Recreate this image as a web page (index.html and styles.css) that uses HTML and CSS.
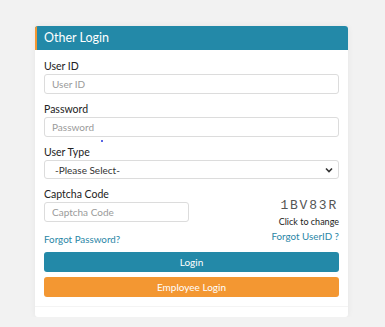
FILE: index.html
```html
<!DOCTYPE html>
<html lang="en">
<head>
  <meta charset="UTF-8" />
  <meta name="viewport" content="width=device-width, initial-scale=1.0"/>
  <title>Other Login</title>
  <link rel="stylesheet" href="styles.css">
</head>
<body>

  <div class="login-card">
    <div class="login-header">Other Login</div>

    <form class="login-body">
      <div class="field">
        <label>User ID</label>
        <input type="text" placeholder="User ID">
      </div>

      <div class="field">
        <label>Password</label>
        <input type="password" placeholder="Password">
      </div>

      <div class="field">
        <label>User Type <span class="dot"></span></label>
        <div class="select-box">
          <span>-Please Select-</span>
          <svg width="8" height="6" viewBox="0 0 8 6"><path d="M1 1.5 L4 4.5 L7 1.5" fill="none" stroke="#333" stroke-width="1.6"/></svg>
        </div>
      </div>

      <div class="captcha-row">
        <div class="captcha-left">
          <label>Captcha Code</label>
          <input type="text" placeholder="Captcha Code">
          <a class="link forgot-pass" href="#">Forgot Password?</a>
        </div>
        <div class="captcha-right">
          <div class="captcha-code">1BV83R</div>
          <div class="captcha-hint">Click to change</div>
          <a class="link" href="#">Forgot UserID ?</a>
        </div>
      </div>

      <div class="buttons">
        <button type="button" class="btn btn-login">Login</button>
        <button type="button" class="btn btn-employee">Employee Login</button>
      </div>
    </form>

    <div class="login-footer"></div>
  </div>

</body>
</html>
```

FILE: styles.css
```css
body {
  margin: 0;
  font-family: 'Lato', 'Noto Sans', sans-serif;
  background: #f2f2f2;
  color: #222;
}

.login-card {
  width: 313px;
  margin: 26px 0 0 35px;
  background: #fff;
  border-radius: 3px;
  box-shadow: 0 0 6px rgba(0, 0, 0, 0.06);
  overflow: hidden;
}

.login-header {
  height: 24px;
  line-height: 24px;
  background: #2389a8;
  border-left: 2px solid #f39732;
  padding-left: 7px;
  color: #fff;
  font-size: 12.5px;
}

.login-body {
  padding: 9px;
  display: flex;
  flex-direction: column;
  gap: 8px;
}

.field {
  display: flex;
  flex-direction: column;
}

label {
  font-size: 10.5px;
  line-height: 14px;
  margin-bottom: 1px;
  color: #222;
  position: relative;
}

.dot {
  position: absolute;
  left: 57px;
  top: -5px;
  width: 2px;
  height: 2px;
  border-radius: 50%;
  background: #2233dd;
}

input {
  box-sizing: border-box;
  height: 20px;
  border: 1px solid #dcdcdc;
  border-radius: 3px;
  padding: 0 7px;
  font-family: inherit;
  font-size: 10px;
  color: #333;
  outline: none;
}

input::placeholder {
  color: #9a9a9a;
}

.select-box {
  box-sizing: border-box;
  height: 19px;
  border: 1px solid #dcdcdc;
  border-radius: 3px;
  padding: 0 5px 0 10px;
  display: flex;
  align-items: center;
  justify-content: space-between;
  font-size: 10px;
  color: #333;
}

.captcha-row {
  display: flex;
  justify-content: space-between;
}

.captcha-left {
  width: 145px;
  display: flex;
  flex-direction: column;
}

.forgot-pass {
  margin-top: 10px;
}

.captcha-right {
  display: flex;
  flex-direction: column;
  align-items: flex-end;
  padding-top: 11px;
}

.captcha-code {
  font-family: 'Liberation Mono', monospace;
  font-size: 13px;
  letter-spacing: 1.8px;
  color: #555;
  line-height: 16px;
  margin-right: 1px;
}

.captcha-hint {
  font-size: 9px;
  line-height: 15px;
  color: #222;
}

.link {
  font-size: 9.8px;
  line-height: 15px;
  color: #2a86a6;
  text-decoration: none;
}

.buttons {
  display: flex;
  flex-direction: column;
  gap: 5px;
  margin-top: -3px;
}

.btn {
  height: 20px;
  border: none;
  border-radius: 3px;
  font-family: inherit;
  font-size: 10px;
  color: #fff;
  cursor: pointer;
}

.btn-login {
  background: #2389a8;
}

.btn-employee {
  background: #f39732;
}

.login-footer {
  height: 10px;
  border-top: 1px solid #f4f4f4;
}
```
